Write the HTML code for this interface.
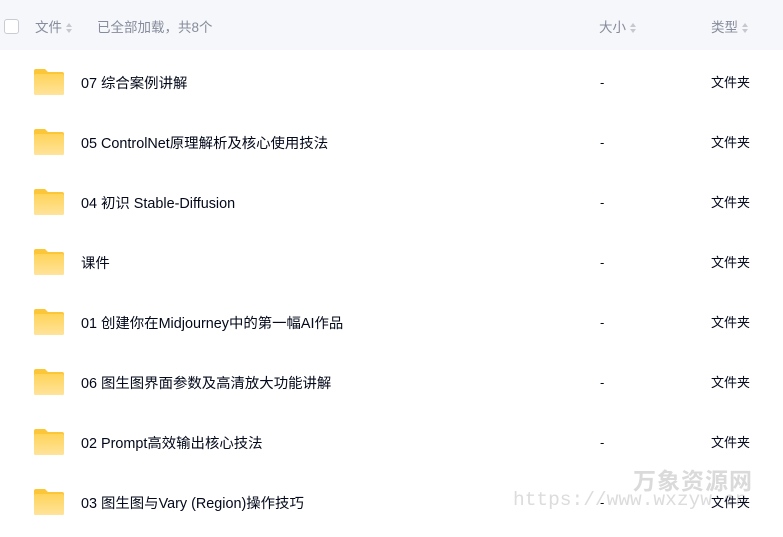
<!DOCTYPE html>
<html><head><meta charset="utf-8"><style>
*{margin:0;padding:0;box-sizing:border-box}
body{width:783px;height:537px;background:#fff;font-family:"Liberation Sans","Noto Sans CJK SC",sans-serif;position:relative;overflow:hidden}
.hdr{position:absolute;left:0;top:0;width:783px;height:50px;background:#f5f7fa}
.t{position:absolute;white-space:nowrap}
.h{font-size:13.5px;color:#878c9c;top:16px}
.cb{position:absolute;left:4px;top:19px;width:15px;height:15px;border:1px solid #c9ccd4;border-radius:3px;background:#fff}
.sort{display:inline-block;vertical-align:middle;margin-left:4px;width:6px;height:10px;position:relative}
.sort:before,.sort:after{content:"";position:absolute;left:0;border-left:3px solid transparent;border-right:3px solid transparent}
.sort:before{top:0;border-bottom:4px solid #c5c8cf}
.sort:after{bottom:0;border-top:4px solid #c5c8cf}
.row .n{font-size:14.4px;color:#03081a}
.row .d{font-size:13px;color:#03081a}
.f{position:absolute;left:34px;width:30px;height:26px}
.wm1{position:absolute;left:633px;top:462px;font-size:23px;font-weight:bold;color:#dadada;letter-spacing:1px}
.wm2{position:absolute;left:513px;top:489px;font-family:"Liberation Mono",monospace;font-size:19.5px;color:#dcdcdc}
</style></head><body>
<div class="hdr"></div>
<div class="cb"></div>
<div class="t h" style="left:35px">文件<span class="sort"></span></div>
<div class="t h" style="left:97px">已全部加载，共8个</div>
<div class="t h" style="left:599px">大小<span class="sort"></span></div>
<div class="t h" style="left:711px">类型<span class="sort"></span></div>

<div class="wm1">万象资源网</div>
<div class="wm2">https://www.wxzyw.cn</div>

<div id="rows"></div>
<script>
var names=["07 综合案例讲解","05 ControlNet原理解析及核心使用技法","04 初识 Stable-Diffusion","课件","01 创建你在Midjourney中的第一幅AI作品","06 图生图界面参数及高清放大功能讲解","02 Prompt高效输出核心技法","03 图生图与Vary (Region)操作技巧"];
var h="";
names.forEach(function(n,i){
 var c=82+i*60;
 h+='<div class="row"><svg class="f" style="top:'+(c-13)+'px" viewBox="0 0 30 26"><defs><linearGradient id="g'+i+'" x1="0" y1="0" x2="0" y2="1"><stop offset="0" stop-color="#ffd45a"/><stop offset="1" stop-color="#ffe39b"/></linearGradient></defs><path d="M2 0h9l3 3h14a2 2 0 0 1 2 2v19a2 2 0 0 1-2 2H2a2 2 0 0 1-2-2V2a2 2 0 0 1 2-2z" fill="#fbc738"/><rect x="0" y="5" width="30" height="21" rx="2" fill="url(#g'+i+')"/></svg>'+
 '<div class="t n" style="left:81px;top:'+(c-10)+'px">'+n+'</div>'+
 '<div class="t d" style="left:600px;top:'+(c-7)+'px">-</div>'+
 '<div class="t d" style="left:711px;top:'+(c-10)+'px">文件夹</div></div>';
});
document.getElementById("rows").innerHTML=h;
</script>
</body></html>
